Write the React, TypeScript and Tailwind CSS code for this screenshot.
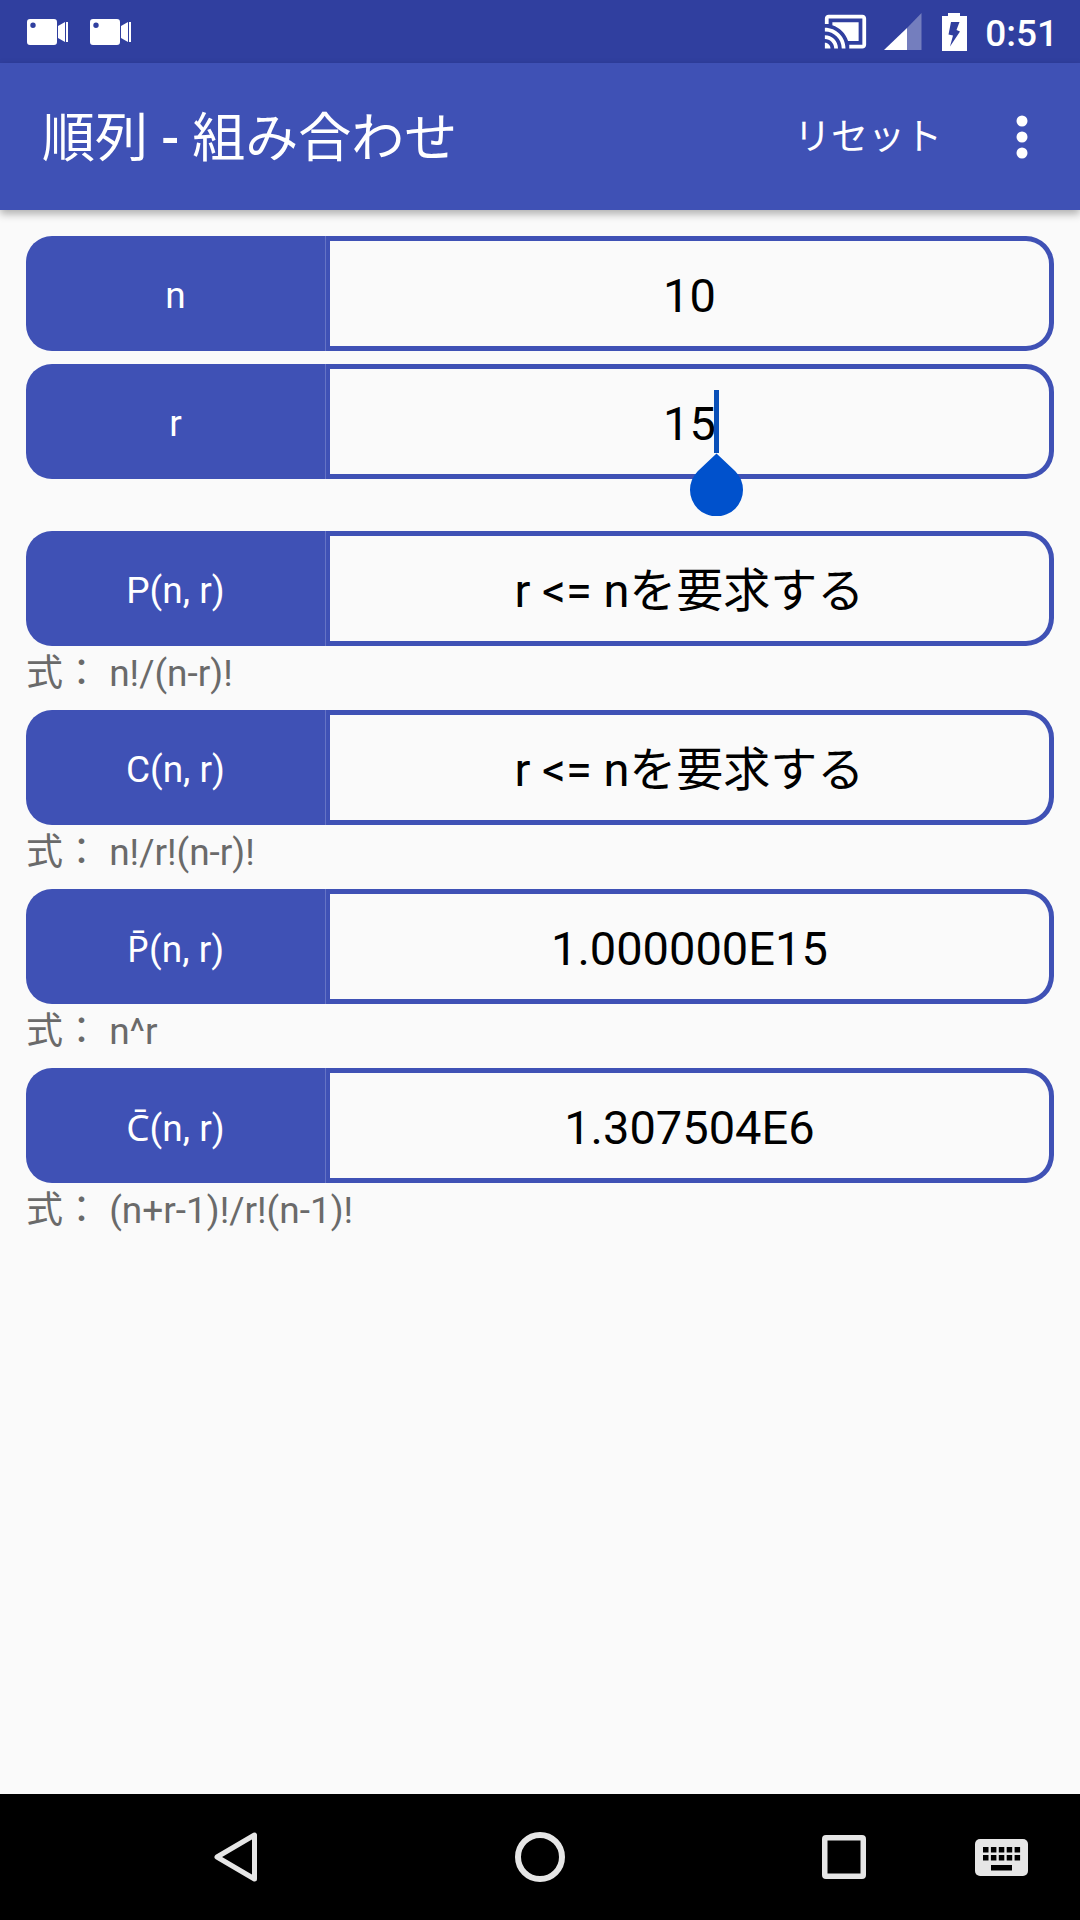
import React, { useState } from 'react';

const results = [
  { id: 'p', symbol: 'P', value: 'r <= nを要求する', formula: 'n!/(n-r)!' },
  { id: 'c', symbol: 'C', value: 'r <= nを要求する', formula: 'n!/r!(n-r)!' },
  { id: 'p-rep', symbol: 'P\u0304', macron: true, value: '1.000000E15', formula: 'n^r' },
  { id: 'c-rep', symbol: 'C\u0304', macron: true, value: '1.307504E6', formula: '(n+r-1)!/r!(n-1)!' },
];

const rowClass = 'grid grid-cols-[7fr_17fr] h-[115px]';
const labelClass =
  'flex items-center justify-center rounded-l-[26px] border-r border-[#6573c4] bg-[#3f51b5] pt-1 text-white text-[37px] leading-[44px]';
const valueClass =
  'w-full h-full rounded-r-[28px] border-5 border-l-4 border-[#3f51b5] bg-[#fafafa] pt-1 text-black text-[47px] leading-[56px] text-center outline-none';

function VideoIcon() {
  return (
    <svg className="w-[42px] h-[28px]" viewBox="0 0 42 28" aria-hidden="true">
      <path
        fillRule="evenodd"
        fill="#fff"
        d="M4 1h24a3 3 0 0 1 3 3v20a3 3 0 0 1-3 3H4a3 3 0 0 1-3-3V4a3 3 0 0 1 3-3zm3 3.500a2.700 2.700 0 1 0 0 5.400a2.700 2.700 0 0 0 0-5.400z"
      />
      <path fill="#fff" d="M32 8l7-4v20l-7-4zM40 4h2v20h-2z" />
    </svg>
  );
}

function CastIcon() {
  return (
    <svg className="w-[45px] h-[45px]" viewBox="0 0 24 24" fill="#fff" aria-hidden="true">
      <path d="M1 18v3h3c0-1.660-1.340-3-3-3zm0-4v2c2.760 0 5 2.240 5 5h2c0-3.870-3.130-7-7-7zM19 7H5v1.630c3.960 1.280 7.090 4.410 8.370 8.370H19V7zM1 10v2c4.970 0 9 4.030 9 9h2c0-6.080-4.930-11-11-11zm20-7H3c-1.100 0-2 .9-2 2v3h2V5h18v14h-7v2h7c1.100 0 2-.9 2-2V5c0-1.100-.9-2-2-2z" />
    </svg>
  );
}

function SignalIcon() {
  return (
    <svg className="w-[38px] h-[38px]" viewBox="0 0 38 38" fill="#fff" aria-hidden="true">
      <path d="M23 15L37.500 0V37H23z" opacity="0.33" />
      <path d="M0 37L23 15V37z" />
    </svg>
  );
}

function BatteryIcon() {
  return (
    <svg className="w-[25px] h-[38px]" viewBox="0 0 25 38" aria-hidden="true">
      <path
        fillRule="evenodd"
        fill="#fff"
        d="M6 0h12v3h7v35H0V3h6zM9 9L6.500 21.500L11 22.500L8 33.500L18 18.500L14.500 17L17.500 9z"
      />
    </svg>
  );
}

export default function App() {
  const [n, setN] = useState('10');
  const [r, setR] = useState('15');

  const handleReset = () => {
    setN('');
    setR('');
  };

  return (
    <div className="flex min-h-screen flex-col bg-[#fafafa] font-[Roboto,'Noto_Sans_CJK_JP',sans-serif]" lang="ja">
      {/* Status bar */}
      <div className="flex h-[63px] items-center justify-between bg-[#303f9f] pl-[26px] pr-[22px]">
        <div className="flex items-center gap-[21px]">
          <VideoIcon />
          <VideoIcon />
        </div>
        <div className="flex items-center">
          <CastIcon />
          <div className="ml-4"><SignalIcon /></div>
          <div className="ml-5"><BatteryIcon /></div>
          <span className="ml-[18px] pt-1 text-[37px] leading-[44px] font-medium text-white">0:51</span>
        </div>
      </div>

      {/* App bar */}
      <header className="relative flex h-[147px] items-center justify-between bg-[#3f51b5] pl-[42px] pr-[26px] text-white shadow-[0_4px_8px_rgba(0,0,0,0.3)]">
        <h1 className="pt-1 text-[53px] leading-[60px] font-normal">
          順列 <span className="font-medium">-</span> 組み合わせ
        </h1>
        <div className="flex items-center">
          <button type="button" onClick={handleReset} className="px-8 pt-0.5 text-[37px] leading-[44px]">
            リセット
          </button>
          <button type="button" aria-label="その他" className="flex h-24 w-[64px] ml-4 items-center justify-center">
            <svg className="w-3 h-[44px]" viewBox="0 0 12 44" fill="#fff">
              <circle cx="6" cy="6" r="5.500" />
              <circle cx="6" cy="22" r="5.500" />
              <circle cx="6" cy="38" r="5.500" />
            </svg>
          </button>
        </div>
      </header>

      <main className="flex-1 px-[26px] pt-[26px]">
        <div className="space-y-[13px]">
          <div className={rowClass}>
            <label htmlFor="n" className={labelClass}>n</label>
            <input id="n" inputMode="numeric" value={n} onChange={(e) => setN(e.target.value)} className={valueClass} />
          </div>
          <div className={rowClass}>
            <label htmlFor="r" className={labelClass}>r</label>
            <div className="relative">
              <input
                id="r"
                inputMode="numeric"
                value={r}
                onChange={(e) => setR(e.target.value)}
                className={`${valueClass} caret-transparent`}
              />
              {/* Cursor and its drag handle */}
              <svg
                className="pointer-events-none absolute top-[26px] left-1/2 h-[126px] w-[53px]"
                viewBox="0 0 53 126"
                aria-hidden="true"
              >
                <path fill="#0a50b8" d="M24 0h5v63h-5z" />
                <path fill="#0051cc" d="M26.500 63.500L45.300 81.200A26.500 26.500 0 1 1 7.700 81.200z" />
              </svg>
            </div>
          </div>
        </div>

        <div className="mt-[52px]">
          {results.map((item) => (
            <section key={item.id}>
              <div className={rowClass}>
                <label htmlFor={item.id} className={labelClass}>
                  {/* Roboto has no anchor for the combining macron */}
                  <span>
                    <span className={item.macron ? "font-['Noto_Sans',sans-serif]" : ''}>{item.symbol}</span>(n, r)
                  </span>
                </label>
                <output id={item.id} className={`${valueClass} flex items-center justify-center`}>{item.value}</output>
              </div>
              <p className="h-16 pt-1.5 text-[37px] leading-[44px] text-[#6a6a6a]">式： {item.formula}</p>
            </section>
          ))}
        </div>
      </main>

      {/* Navigation bar */}
      <nav className="grid h-[126px] grid-cols-[7fr_7fr_20fr_7fr_7fr] items-center justify-items-center bg-black">
        <button type="button" aria-label="戻る" className="col-start-2 p-4">
          <svg className="w-[50px] h-[50px]" viewBox="0 0 50 50" fill="none" stroke="#e6e6e6" strokeWidth="5" strokeLinejoin="round">
            <path d="M43.500 3V47L6 25z" />
          </svg>
        </button>
        <button type="button" aria-label="ホーム" className="p-4">
          <svg className="w-[50px] h-[50px]" viewBox="0 0 50 50" fill="none" stroke="#e6e6e6" strokeWidth="6">
            <circle cx="25" cy="25" r="22" />
          </svg>
        </button>
        <button type="button" aria-label="最近" className="p-4">
          <svg className="w-[44px] h-[44px]" viewBox="0 0 44 44" fill="#e6e6e6" fillRule="evenodd">
            <path d="M4 0h36a4 4 0 0 1 4 4v36a4 4 0 0 1-4 4H4a4 4 0 0 1-4-4V4a4 4 0 0 1 4-4zM5.500 5.500v33h33v-33z" />
          </svg>
        </button>
        <button type="button" aria-label="キーボード" className="p-4">
          <svg className="w-[53px] h-[37px]" viewBox="0 0 53 37">
            <rect width="53" height="37" rx="5" fill="#e6e6e6" />
            <path
              stroke="#000"
              strokeWidth="5.500"
              strokeDasharray="5.500 2.400"
              d="M8 10.700h37.500M8 18.700h37.500"
            />
            <path fill="#000" d="M16 26h21v5.500H16z" />
          </svg>
        </button>
      </nav>
    </div>
  );
}
